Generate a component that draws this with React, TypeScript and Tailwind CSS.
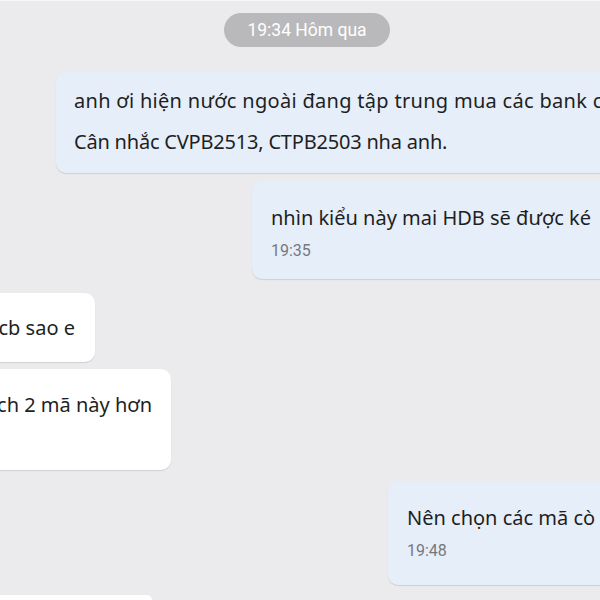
const msg = "font-['Noto_Sans',sans-serif] text-[20px] leading-[41px] text-[#1e1f22]";
const time = "font-['Roboto',sans-serif] text-[16px] leading-[20px] text-[#77787c]";

function Mine({ children }: { children: React.ReactNode }) {
  return (
    <div className="rounded-l-[10px] bg-[#e6eefa] shadow-[0_1px_1px_rgba(0,0,0,0.12)]">
      {children}
    </div>
  );
}

function Theirs({ children }: { children: React.ReactNode }) {
  return (
    <div className="rounded-r-[10px] bg-white shadow-[0_1px_1px_rgba(0,0,0,0.12)]">
      {children}
    </div>
  );
}

export default function App() {
  return (
    <div className="flex h-[600px] w-[600px] flex-col overflow-hidden border-t border-t-[#f7f7f8] bg-[#ebebed]">
      <div className="mt-[12px] flex justify-center pl-[14px]">
        <span className="flex h-[34px] w-[166px] items-center justify-center rounded-full bg-[#b9b9bb] font-['Roboto',sans-serif] text-[17.5px] text-white">
          19:34 Hôm qua
        </span>
      </div>

      <div className="ml-[56px] mt-[25px] w-[600px]">
        <Mine>
          <div className={`${msg} whitespace-nowrap px-[18px] pb-[11px] pt-[8px]`}>
            <p className="tracking-[0.3px]">anh ơi hiện nước ngoài đang tập trung mua các bank c</p>
            <p className="tracking-[-0.2px]">Cân nhắc CVPB2513, CTPB2503 nha anh.</p>
          </div>
        </Mine>
      </div>

      <div className="ml-[252px] mt-[8px] w-[400px]">
        <Mine>
          <div className="whitespace-nowrap px-[19px] pb-[18px] pt-[16px]">
            <p className={`${msg} leading-[40px]`}>nhìn kiểu này mai HDB sẽ được ké</p>
            <p className={`${time} mt-[3px]`}>19:35</p>
          </div>
        </Mine>
      </div>

      <div className="mt-[14px] w-[95px]">
        <Theirs>
          <div className={`${msg} flex h-[69px] items-center justify-end whitespace-nowrap pr-[20px]`}>
            cb sao e
          </div>
        </Theirs>
      </div>

      <div className="mt-[7px] w-[171px]">
        <Theirs>
          <div className={`${msg} flex h-[101px] justify-end whitespace-nowrap pr-[19px] pt-[15px]`}>
            ch 2 mã này hơn
          </div>
        </Theirs>
      </div>

      <div className="ml-[388px] mt-[11px] w-[400px]">
        <Mine>
          <div className="whitespace-nowrap px-[19px] pb-[24px] pt-[16px]">
            <p className={`${msg} leading-[40px]`}>Nên chọn các mã cò</p>
            <p className={`${time} mt-[3px]`}>19:48</p>
          </div>
        </Mine>
      </div>

      <div className="mt-[10px] h-[40px] w-[152px] rounded-tr-[10px] bg-white" />
    </div>
  );
}
